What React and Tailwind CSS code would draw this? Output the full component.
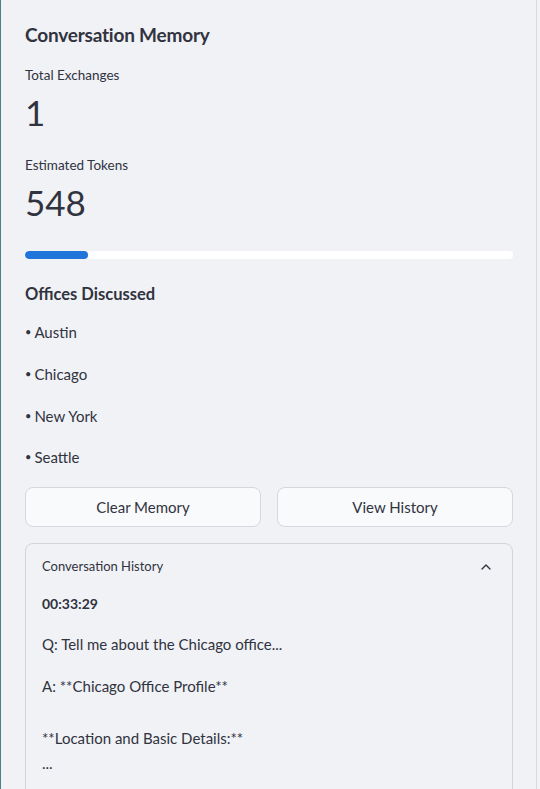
import React from "react";
import { ChevronUp } from "lucide-react";

export default function App() {
  const offices = ["Austin", "Chicago", "New York", "Seattle"];
  const bulletMt = ["mt-[14px]", "mt-[18px]", "mt-[18px]", "mt-[17px]"];
  return (
    <div
      className="w-[540px] h-[789px] overflow-hidden flex bg-[#f0f2f6] text-[#31333f]"
      style={{ fontFamily: "Lato, 'Noto Sans', sans-serif" }}
    >
      <div className="w-px bg-[#4b8089] shrink-0" />
      <div className="w-[535px] shrink-0 pl-6 pr-[23px] pt-[21px]">
        <div className="h-[28px] flex items-center text-[19px] font-bold tracking-[-0.2px]">
          Conversation Memory
        </div>
        <div className="mt-[16px] h-[20px] flex items-center text-[13.5px]">Total Exchanges</div>
        <div className="mt-[5px] h-[44px] flex items-center text-[35px] leading-none">1</div>
        <div className="mt-[21px] h-[20px] flex items-center text-[13.5px]">Estimated Tokens</div>
        <div className="mt-[5px] h-[44px] flex items-center text-[35px] leading-none">548</div>
        <div className="mt-[27px] h-[8px] rounded-full bg-white overflow-hidden">
          <div className="h-full rounded-full bg-[#1f75d9]" style={{ width: "63px" }} />
        </div>
        <div className="mt-[23px] h-[24px] flex items-center text-[16.5px] font-bold">
          Offices Discussed
        </div>
        {offices.map((o, i) => (
          <div key={o} className={`${bulletMt[i]} h-[24px] flex items-center text-[15px]`}>
            <span className="text-[11px] mr-[3px]">•</span>
            {o}
          </div>
        ))}
        <div className="mt-[18px] grid grid-cols-2 gap-4">
          <button className="h-[40px] rounded-lg border border-[#d5d7dc] bg-[#f9fafb] text-[15px]">
            Clear Memory
          </button>
          <button className="h-[40px] rounded-lg border border-[#d5d7dc] bg-[#f9fafb] text-[15px]">
            View History
          </button>
        </div>
        <div className="mt-[16px] h-[400px] rounded-lg border border-[#d3d5d9] px-4">
          <div className="h-[46px] flex items-center justify-between text-[13px]">
            <span>Conversation History</span>
            <ChevronUp size={16} strokeWidth={2} className="mr-[2px] text-[#31333f]" />
          </div>
          <div className="mt-[1px] h-[24px] flex items-center text-[14px] font-bold">00:33:29</div>
          <div className="mt-[17px] h-[24px] flex items-center text-[15px]">
            Q: Tell me about the Chicago office...
          </div>
          <div className="mt-[18px] h-[24px] flex items-center text-[15px]">
            A: **Chicago Office Profile**
          </div>
          <div className="mt-[28px] h-[24px] flex items-center text-[15px]">
            **Location and Basic Details:**
          </div>
          <div className="mt-[1px] h-[24px] flex items-center text-[15px]">...</div>
        </div>
      </div>
      <div className="w-px bg-[#d9dadd] shrink-0" />
      <div className="flex-1" />
    </div>
  );
}
